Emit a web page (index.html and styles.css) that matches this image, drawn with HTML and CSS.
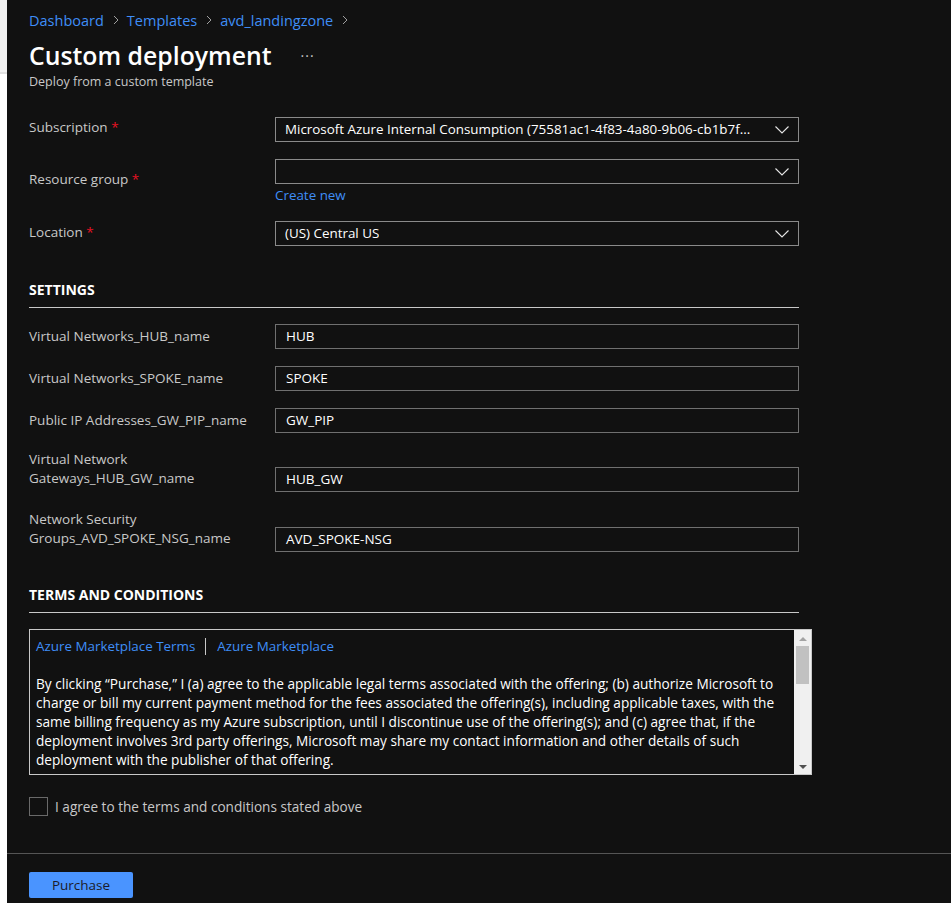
FILE: index.html
```html
<!DOCTYPE html>
<html lang="en">
<head>
<meta charset="utf-8">
<title>Custom deployment</title>
<link rel="stylesheet" href="styles.css">
</head>
<body>
<div class="page">
  <div class="edge">
    <div class="edge-top"></div>
    <div class="edge-rest"></div>
  </div>
  <div class="main">
    <div class="content">
      <nav class="crumbs">
        <a class="crumb">Dashboard</a>
        <svg class="chev" viewBox="0 0 6 10" width="6" height="10"><path d="M1 1l4 4-4 4" fill="none" stroke="#a0a0a0" stroke-width="1"/></svg>
        <a class="crumb">Templates</a>
        <svg class="chev" viewBox="0 0 6 10" width="6" height="10"><path d="M1 1l4 4-4 4" fill="none" stroke="#a0a0a0" stroke-width="1"/></svg>
        <a class="crumb">avd_landingzone</a>
        <svg class="chev" viewBox="0 0 6 10" width="6" height="10"><path d="M1 1l4 4-4 4" fill="none" stroke="#a0a0a0" stroke-width="1"/></svg>
      </nav>
      <div class="title-row">
        <h1 class="title">Custom deployment</h1>
        <span class="more">···</span>
      </div>
      <div class="subtitle">Deploy from a custom template</div>

      <div class="form basics">
        <div class="row">
          <div class="label">Subscription <span class="req">*</span></div>
          <div class="field">
            <div class="select"><span class="val">Microsoft Azure Internal Consumption (75581ac1-4f83-4a80-9b06-cb1b7f...</span>
              <svg class="dd" viewBox="0 0 14 8" width="14" height="8"><path d="M0.5 0.5l6.5 6.5 6.5-6.5" fill="none" stroke="#e6e6e6" stroke-width="1.1"/></svg></div>
          </div>
        </div>
        <div class="row">
          <div class="label rg">Resource group <span class="req">*</span></div>
          <div class="field">
            <div class="select"><span class="val"></span>
              <svg class="dd" viewBox="0 0 14 8" width="14" height="8"><path d="M0.5 0.5l6.5 6.5 6.5-6.5" fill="none" stroke="#e6e6e6" stroke-width="1.1"/></svg></div>
            <a class="link create">Create new</a>
          </div>
        </div>
        <div class="row">
          <div class="label loc">Location <span class="req">*</span></div>
          <div class="field">
            <div class="select"><span class="val">(US) Central US</span>
              <svg class="dd" viewBox="0 0 14 8" width="14" height="8"><path d="M0.5 0.5l6.5 6.5 6.5-6.5" fill="none" stroke="#e6e6e6" stroke-width="1.1"/></svg></div>
          </div>
        </div>
      </div>

      <h2 class="section">SETTINGS</h2>
      <div class="form settings">
        <div class="row">
          <div class="label">Virtual Networks_HUB_name</div>
          <div class="input">HUB</div>
        </div>
        <div class="row">
          <div class="label">Virtual Networks_SPOKE_name</div>
          <div class="input">SPOKE</div>
        </div>
        <div class="row">
          <div class="label">Public IP Addresses_GW_PIP_name</div>
          <div class="input">GW_PIP</div>
        </div>
        <div class="row two">
          <div class="label">Virtual Network<br>Gateways_HUB_GW_name</div>
          <div class="input">HUB_GW</div>
        </div>
        <div class="row two last">
          <div class="label">Network Security<br>Groups_AVD_SPOKE_NSG_name</div>
          <div class="input">AVD_SPOKE-NSG</div>
        </div>
      </div>

      <h2 class="section terms-head">TERMS AND CONDITIONS</h2>
      <div class="terms">
        <div class="terms-body">
          <div class="terms-links">
            <a class="link">Azure Marketplace Terms</a>
            <span class="sep"></span>
            <a class="link">Azure Marketplace</a>
          </div>
          <p class="terms-text">By clicking “Purchase,” I (a) agree to the applicable legal terms associated with the offering; (b) authorize Microsoft to<br>charge or bill my current payment method for the fees associated the offering(s), including applicable taxes, with the<br>same billing frequency as my Azure subscription, until I discontinue use of the offering(s); and (c) agree that, if the<br>deployment involves 3rd party offerings, Microsoft may share my contact information and other details of such<br>deployment with the publisher of that offering.</p>
        </div>
        <div class="scrollbar">
          <svg class="arrow" viewBox="0 0 8 4" width="8" height="4"><path d="M0 4L4 0 8 4z" fill="#a3a3a3"/></svg>
          <div class="track"><div class="thumb"></div></div>
          <svg class="arrow" viewBox="0 0 8 4" width="8" height="4"><path d="M0 0h8L4 4z" fill="#505050"/></svg>
        </div>
      </div>

      <label class="agree">
        <span class="box"></span>
        <span class="agree-text">I agree to the terms and conditions stated above</span>
      </label>
    </div>
    <div class="footer">
      <button class="purchase">Purchase</button>
    </div>
  </div>
</div>
</body>
</html>
```

FILE: styles.css
```css
* { box-sizing: border-box; }
html, body { margin: 0; padding: 0; height: 100%; }
body {
  font-family: "Open Sans", "Noto Sans", "Liberation Sans", sans-serif;
  background: #ffffff;
  color: #ffffff;
  font-size: 13.5px;
}
.page {
  display: flex;
  height: 903px;
  overflow: hidden;
}
.edge {
  width: 7px;
  display: flex;
  flex-direction: column;
}
.edge-top {
  height: 74px;
  background: #f2f2f2;
  border-bottom: 2px solid #e0e0e0;
}
.edge-rest { flex: 1; background: #ffffff; }

.main {
  flex: 1;
  background: #111111;
  display: flex;
  flex-direction: column;
}
.content {
  padding: 10px 0 0 22px;
  width: 812px;
}
.crumbs {
  display: flex;
  align-items: center;
  height: 20px;
  font-size: 14.5px;
}
.crumb { color: #3f8ef7; }
.chev { margin: 0 8px 0 9px; }

.title-row {
  display: flex;
  align-items: center;
  margin-top: 9px;
  height: 32px;
}
.title {
  margin: 0;
  font-size: 24.8px;
  font-weight: 600;
  line-height: 32px;
  color: #ffffff;
}
.more {
  margin-left: 29px;
  color: #c8c8c8;
  font-size: 14px;
  letter-spacing: 1px;
}
.subtitle {
  margin-top: 2px;
  font-size: 12.5px;
  line-height: 17px;
  color: #c8c8c8;
}

.form { display: flex; flex-direction: column; }
.row {
  display: grid;
  grid-template-columns: 246px 524px;
}
.label {
  color: #c8c8c8;
  font-size: 13.5px;
  line-height: 19px;
}
.req { color: #e81123; }

.basics { margin-top: 27px; gap: 17px; }
.basics .row { align-items: start; }
.basics .label { padding-top: 1px; }
.basics .label.rg { padding-top: 11px; }
.basics .label.loc { padding-top: 2px; }

.select {
  height: 25px;
  border: 1px solid #8a8a8a;
  display: flex;
  align-items: center;
  padding: 0 9px 1px 9px;
  justify-content: space-between;
}
.val {
  color: #ffffff;
  font-size: 13.4px;
  white-space: nowrap;
  overflow: hidden;
}
.dd { flex: none; margin-left: 8px; margin-top: 1px; }
.link { color: #3f8ef7; font-size: 13.4px; }
.create {
  display: block;
  margin-top: 2px;
  line-height: 18px;
}

.section {
  margin: 35px 0 0 0;
  font-size: 14px;
  font-weight: 700;
  line-height: 18px;
  padding-bottom: 8px;
  border-bottom: 1px solid #c8c8c8;
  width: 770px;
  color: #ffffff;
}
.settings { margin-top: 16px; gap: 17px; }
.input {
  height: 25px;
  border: 1px solid #707070;
  padding: 0 10px;
  font-size: 13.5px;
  line-height: 23px;
  color: #ffffff;
}
.settings .row { align-items: center; }
.settings .row.two { align-items: start; }
.settings .row.two .input { margin-top: 17px; }
.settings .row.last { margin-top: 1px; }

.terms-head { margin-top: 34px; }
.terms {
  margin-top: 16px;
  width: 783px;
  height: 146px;
  border: 1px solid #c8c8c8;
  display: flex;
  overflow: hidden;
}
.terms-body {
  flex: 1;
  padding: 6px 0 0 6px;
  overflow: hidden;
}
.terms-links {
  display: flex;
  align-items: center;
  height: 20px;
}
.sep {
  width: 1px;
  height: 17px;
  background: #c8c8c8;
  margin: 0 11px 0 10px;
}
.terms-text {
  margin: 18px 0 0 0;
  font-size: 13.65px;
  line-height: 19px;
  color: #ffffff;
  white-space: nowrap;
}
.scrollbar {
  width: 17px;
  background: #f0f0f0;
  display: flex;
  flex-direction: column;
  align-items: center;
  padding: 7px 0 5px;
}
.arrow { flex: none; }
.track {
  flex: 1;
  width: 100%;
  padding: 5px 2px 0;
}
.thumb {
  height: 38px;
  background: #c1c1c1;
}

.agree {
  display: flex;
  align-items: center;
  margin-top: 22px;
  height: 19px;
}
.box {
  width: 19px;
  height: 19px;
  border: 1px solid #6a6a6a;
}
.agree-text {
  margin-left: 7px;
  color: #c8c8c8;
  font-size: 13.6px;
}

.footer {
  margin-top: auto;
  border-top: 1px solid #555555;
  height: 50px;
  padding: 18px 0 0 22px;
}
.purchase {
  width: 104px;
  height: 26px;
  background: #4a94ff;
  border: none;
  border-radius: 2px;
  color: #1c1c2a;
  font-family: "Open Sans", "Noto Sans", sans-serif;
  font-size: 13.5px;
  padding: 0;
}
```
